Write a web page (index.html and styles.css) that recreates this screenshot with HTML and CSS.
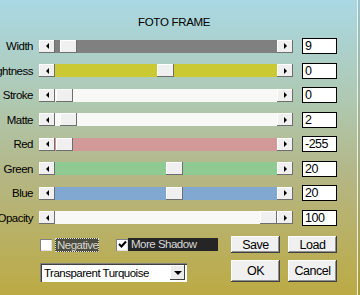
FILE: index.html
```html
<!DOCTYPE html>
<html lang="en">
<head>
    <meta charset="UTF-8">
    <title>Foto Frame</title>
    <link rel="stylesheet" href="styles.css">
</head>
<body>
    <div class="dialog">
        <h1 class="title">FOTO FRAME</h1>

        <!-- Sliders -->
        <div class="rows">
            <div class="row">
                <span class="label">Width</span>
                <div class="scroll">
                    <span class="arrow arrow-left"></span>
                    <div class="track track-gray"><span class="thumb" style="margin-left: 5px"></span></div>
                    <span class="arrow arrow-right"></span>
                </div>
                <div class="value">9</div>
            </div>
            <div class="row">
                <span class="label">Brightness</span>
                <div class="scroll">
                    <span class="arrow arrow-left"></span>
                    <div class="track track-yellow"><span class="thumb" style="margin-left: 102px"></span></div>
                    <span class="arrow arrow-right"></span>
                </div>
                <div class="value">0</div>
            </div>
            <div class="row">
                <span class="label">Stroke</span>
                <div class="scroll">
                    <span class="arrow arrow-left"></span>
                    <div class="track track-white"><span class="thumb" style="margin-left: 1px"></span></div>
                    <span class="arrow arrow-right"></span>
                </div>
                <div class="value">0</div>
            </div>
            <div class="row">
                <span class="label">Matte</span>
                <div class="scroll">
                    <span class="arrow arrow-left"></span>
                    <div class="track track-white"><span class="thumb" style="margin-left: 5px"></span></div>
                    <span class="arrow arrow-right"></span>
                </div>
                <div class="value">2</div>
            </div>
            <div class="row">
                <span class="label">Red</span>
                <div class="scroll">
                    <span class="arrow arrow-left"></span>
                    <div class="track track-red"><span class="thumb" style="margin-left: 1px"></span></div>
                    <span class="arrow arrow-right"></span>
                </div>
                <div class="value">-255</div>
            </div>
            <div class="row">
                <span class="label">Green</span>
                <div class="scroll">
                    <span class="arrow arrow-left"></span>
                    <div class="track track-green"><span class="thumb" style="margin-left: 111px"></span></div>
                    <span class="arrow arrow-right"></span>
                </div>
                <div class="value">20</div>
            </div>
            <div class="row">
                <span class="label">Blue</span>
                <div class="scroll">
                    <span class="arrow arrow-left"></span>
                    <div class="track track-blue"><span class="thumb" style="margin-left: 111px"></span></div>
                    <span class="arrow arrow-right"></span>
                </div>
                <div class="value">20</div>
            </div>
            <div class="row">
                <span class="label">Opacity</span>
                <div class="scroll">
                    <span class="arrow arrow-left"></span>
                    <div class="track track-white"><span class="thumb" style="margin-left: 205px"></span></div>
                    <span class="arrow arrow-right"></span>
                </div>
                <div class="value">100</div>
            </div>
        </div>

        <!-- Options and buttons -->
        <div class="bottom">
            <div class="options">
                <div class="checks">
                    <span class="check"></span>
                    <span class="check-label focus">Negative</span>
                    <span class="check checked">
                        <svg width="9" height="9" viewBox="0 0 9 9"><path d="M1 4 L3.5 6.5 L8 1.5" fill="none" stroke="#000" stroke-width="2"/></svg>
                    </span>
                    <span class="check-label dark">More Shadow</span>
                </div>
                <div class="select">
                    <span class="select-text">Transparent Turquoise</span>
                    <span class="select-btn"><span class="down"></span></span>
                </div>
            </div>
            <div class="buttons">
                <div class="btn btn-small">Save</div>
                <div class="btn btn-small">Load</div>
                <div class="btn btn-big">OK</div>
                <div class="btn btn-big">Cancel</div>
            </div>
        </div>
    </div>
</body>
</html>
```

FILE: styles.css
```css
* {
    margin: 0;
    box-sizing: border-box;
}
body {
    width: 360px;
    height: 295px;
    overflow: hidden;
    font-family: "Liberation Sans", Arial, sans-serif;
    font-size: 11.5px;
    letter-spacing: -0.5px;
    color: #000;
    background: linear-gradient(to bottom, #98c4ce 0%, #a2b08e 45%, #a89a3a 100%);
}
.dialog {
    width: 358px;
    height: 295px;
    border-right: 1px solid #eef0e8;
    background: linear-gradient(to bottom, #a9d8e4 0%, #afc8b0 35%, #b4b684 60%, #bcaa44 100%);
    overflow: hidden;
}

.title {
    font-size: 11.5px;
    font-weight: normal;
    letter-spacing: -0.3px;
    line-height: 14px;
    padding: 15px 0 0 138px;
    height: 34px;
}

/* Slider rows */
.row {
    display: flex;
    align-items: center;
    height: 24.5px;
}
.label {
    width: 33px;
    display: flex;
    justify-content: flex-end;
    white-space: nowrap;
    margin-right: 6px;
}
.scroll {
    display: flex;
    height: 13px;
    width: 254px;
}
.arrow {
    width: 16px;
    height: 13px;
    background: #f0f0f0;
    box-shadow: inset -1px -1px #6e6e6e, inset 1px 1px #fff;
    display: flex;
    align-items: center;
    justify-content: center;
}
.arrow-left::before,
.arrow-right::before {
    content: '';
    border-top: 3px solid transparent;
    border-bottom: 3px solid transparent;
}
.arrow-left::before {
    border-right: 3px solid #000;
}
.arrow-right::before {
    border-left: 3px solid #000;
}
.track {
    flex: 1;
    display: flex;
}
.track-gray { background: #808080; }
.track-yellow { background: #cbc933; }
.track-white { background: #f8f8f6; }
.track-red { background: #d29999; }
.track-green { background: #8fca93; }
.track-blue { background: #80a8d0; }
.thumb {
    width: 17px;
    height: 13px;
    background: #f0f0f0;
    box-shadow: inset -1px -1px #6e6e6e, inset 1px 1px #fff;
}
.value {
    margin-left: 9px;
    width: 35px;
    height: 16px;
    background: #fff;
    border: 1px solid #000;
    padding-left: 2px;
    line-height: 14px;
    font-size: 12.5px;
}

/* Bottom part */
.bottom {
    display: flex;
    margin-top: 6px;
    padding-left: 40px;
}
.options {
    width: 191px;
}
.checks {
    display: flex;
    align-items: center;
    height: 17px;
}
.check {
    width: 12px;
    height: 12px;
    background: #fff;
    box-shadow: inset 1px 1px #808080, inset -1px -1px #e0e0e0;
    display: flex;
    align-items: center;
    justify-content: center;
}
.check-label {
    line-height: 12px;
    white-space: nowrap;
}
.focus {
    width: 44px;
    margin: 0 17px 0 3px;
    padding-left: 1px;
    border: 1px dotted #e0e0d8;
    background: #4c4c40;
    color: #d8d8d0;
}
.dark {
    background: #252525;
    color: #d8d8d8;
    width: 90px;
    height: 13px;
    padding-left: 3px;
}
.select {
    margin-top: 10px;
    width: 147px;
    height: 19px;
    background: #fff;
    box-shadow: inset 1px 1px #808080, inset 2px 2px #404040, inset -1px -1px #fff;
    display: flex;
    align-items: center;
    padding: 0 2px 0 4px;
}
.select-text {
    flex: 1;
    white-space: nowrap;
}
.select-btn {
    width: 15px;
    height: 15px;
    background: #ececec;
    box-shadow: inset -1px -1px #404040, inset 1px 1px #fff;
    display: flex;
    align-items: center;
    justify-content: center;
}
.down {
    border-left: 4px solid transparent;
    border-right: 4px solid transparent;
    border-top: 4px solid #000;
}
.buttons {
    display: grid;
    grid-template-columns: 49px 49px;
    column-gap: 8px;
    row-gap: 6px;
}
.btn {
    background: #f0f0f0;
    box-shadow: inset -1px -1px #404040, inset 1px 1px #fff, inset -2px -2px #909090;
    display: flex;
    align-items: center;
    justify-content: center;
    font-size: 12.5px;
}
.btn-small {
    height: 17px;
}
.btn-big {
    height: 22px;
}
```
